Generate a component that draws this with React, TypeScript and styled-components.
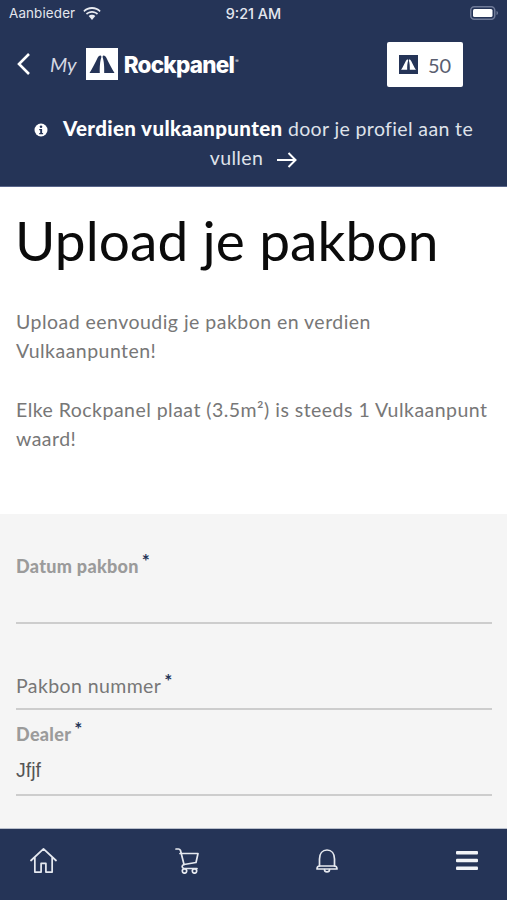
import React from "react";
import styled, { createGlobalStyle } from "styled-components";

const Global = createGlobalStyle`
  html, body { margin: 0; padding: 0; background: #fff; }
  body { font-family: "Lato", "Liberation Sans", sans-serif; }
  * { box-sizing: border-box; }
`;

const navy = "#253457";

const Page = styled.div`
  width: 507px;
  height: 900px;
  display: flex;
  flex-direction: column;
  overflow: hidden;
`;
const Header = styled.header`
  background: ${navy};
  height: 187px;
  flex: none;
  border-bottom: 1px solid #59658a;
`;
const StatusBar = styled.div`
  height: 28px;
  padding: 0 9px 2px 9px;
  display: grid;
  grid-template-columns: 1fr auto 1fr;
  align-items: center;
  color: #e4e7ee;
  font-family: "Inter", "Liberation Sans", sans-serif;
`;
const Carrier = styled.div`
  display: flex;
  align-items: center;
  gap: 8px;
  font-size: 13.4px;
  font-weight: 400;
  letter-spacing: 0.15px;
`;
const Clock = styled.div`
  font-weight: 500;
  font-size: 14.4px;
`;
const BatteryWrap = styled.div`
  justify-self: end;
  display: flex;
`;
const NavRow = styled.div`
  height: 72px;
  padding: 0 44px 0 16px;
  display: flex;
  align-items: center;
  justify-content: space-between;
`;
const Brand = styled.div`
  display: flex;
  align-items: center;
`;
const My = styled.span`
  font-style: italic;
  font-size: 20px;
  color: #d5d9e3;
  margin-left: 18px;
  margin-right: 9px;
`;
const Wordmark = styled.span`
  font-family: "Inter", "Lato", sans-serif;
  font-weight: 800;
  font-size: 22.5px;
  letter-spacing: -0.75px;
  color: #fff;
  margin-left: 6px;
`;
const Reg = styled.sup`
  font-size: 5px;
  font-weight: 400;
  vertical-align: 10px;
  line-height: 0;
  margin-left: 1px;
`;
const PointsBadge = styled.div`
  width: 76px;
  height: 45px;
  margin-top: 1px;
  background: #fff;
  border-radius: 2px;
  display: flex;
  align-items: center;
  gap: 10px;
  padding-left: 12px;
  color: #5a5e70;
  font-size: 20px;
`;
const Banner = styled.div`
  padding: 14px 24px 0;
  text-align: center;
  color: #dfe2ea;
  font-size: 19.5px;
  line-height: 29px;
  letter-spacing: 0.37px;
`;
const Strong = styled.strong`
  color: #fff;
  font-weight: 900;
  font-size: 20.5px;
  line-height: 1;
  letter-spacing: 0.37px;
`;
const InfoSlot = styled.span`
  display: inline-block;
  line-height: 1;
  vertical-align: -1px;
  margin-right: 15px;
`;
const ArrowSlot = styled.span`
  display: inline-block;
  line-height: 1;
  vertical-align: -3px;
  margin-left: 14px;
`;
const Intro = styled.main`
  background: #fff;
  height: 327px;
  flex: none;
  padding: 18px 16px 0 15px;
`;
const Title = styled.h1`
  margin: 0;
  font-weight: 400;
  font-size: 55px;
  line-height: 70px;
  color: #0b0b0b;
  letter-spacing: 0.1px;
`;
const Para = styled.p`
  margin: 0 0 29.5px;
  padding-left: 1px;
  font-size: 19.5px;
  line-height: 29.25px;
  color: #777;
  letter-spacing: 0.47px;
  &:first-of-type { margin-top: 31.5px; }
`;
const Form = styled.section`
  background: #f5f5f5;
  flex: 1;
  min-height: 0;
  padding: 0 15px 0 16px;
`;
const Field = styled.div<{ $height: number }>`
  height: ${(p) => p.$height}px;
  border-bottom: 2px solid #cdcdcd;
  display: flex;
  flex-direction: column;
  justify-content: space-between;
`;
const FloatLabel = styled.label<{ $top: number }>`
  margin-top: ${(p) => p.$top}px;
  font-size: 18px;
  font-weight: 900;
  color: #9b9b9b;
  letter-spacing: 0.3px;
`;
const PlainLabel = styled.label`
  font-size: 19.5px;
  color: #777;
  letter-spacing: 0.4px;
  margin-bottom: 11px;
`;
const Star = styled.sup`
  font-size: 19px;
  font-weight: 700;
  color: ${navy};
  line-height: 0;
  vertical-align: 5px;
  margin-left: 3px;
`;
const Value = styled.div`
  font-family: "Liberation Sans", sans-serif;
  font-size: 19.5px;
  color: #555;
  margin-bottom: 12px;
`;
const TabBar = styled.nav`
  background: ${navy};
  height: 72px;
  flex: none;
  border-top: 1px solid #b9bfcc;
  padding: 0 29px 8px 30px;
  display: flex;
  justify-content: space-between;
  align-items: center;
`;

const Wifi = () => (
  <svg width="18" height="13" viewBox="0 0 20 15" fill="#e9ebf1">
    <path d="M10 2.2c3.4 0 6.5 1.3 8.8 3.5L20 4.2C17.4 1.6 13.9 0 10 0S2.6 1.6 0 4.2l1.2 1.5C3.5 3.5 6.6 2.2 10 2.2z" />
    <path d="M10 6.6c2.2 0 4.2.8 5.7 2.2l1.3-1.5C15.1 5.6 12.7 4.5 10 4.5S4.9 5.6 3 7.3l1.3 1.5C5.8 7.4 7.8 6.6 10 6.6z" />
    <path d="M10 9c-1.500 0-2.800.6-3.800 1.500L10 15l3.800-4.500C12.800 9.600 11.500 9 10 9z" />
  </svg>
);
const Battery = () => (
  <svg width="28" height="14" viewBox="0 0 28 14">
    <rect x="0.75" y="0.75" width="24" height="12.5" rx="3.5" fill="none" stroke="#6f7a98" strokeWidth="1.5" />
    <rect x="3" y="3" width="19.5" height="8" rx="1.5" fill="#fff" />
    <path d="M26.5 5v4c.9-.3 1.500-1.100 1.500-2s-.6-1.700-1.500-2z" fill="#6f7a98" />
  </svg>
);
const Back = () => (
  <svg width="16" height="24" viewBox="0 0 16 24" fill="none" stroke="#fff" strokeWidth="2.6">
    <path d="M13 2 3 12l10 10" />
  </svg>
);
const LogoMark = ({ size, bg, fg }: { size: number; bg: string; fg: string }) => (
  <svg width={size} height={size} viewBox="0 0 32 32" style={{ flex: "none" }}>
    <rect width="32" height="32" fill={bg} />
    <path d="M14.5 7.5C13 7.5 12.3 8.5 11.5 10 9.5 14.500 6.500 20 3.500 25H13.800C13.600 20 14 13 15.300 9.500 15.500 8.500 15.300 7.500 14.500 7.500z" fill={fg} />
    <path d="M17.500 7.500C19 7.500 19.700 8.500 20.500 10 22.500 14.500 25.500 20 28.500 25H18.200C18.400 20 18 13 16.700 9.500 16.500 8.500 16.700 7.500 17.500 7.500z" fill={fg} />
  </svg>
);
const InfoIcon = () => (
  <svg width="14" height="14" viewBox="0 0 14 14">
    <circle cx="7" cy="7" r="6.500" fill="#fff" />
    <circle cx="7" cy="3.800" r="1.300" fill={navy} />
    <path d="M5.200 6h2.900v4h1v1.200H5.200V10h1V7.200h-1z" fill={navy} />
  </svg>
);
const Arrow = () => (
  <svg width="20" height="16" viewBox="0 0 20 16" fill="none" stroke="#fff" strokeWidth="2">
    <path d="M0 8h18.500M11.500 1l7 7-7 7" />
  </svg>
);
const Home = () => (
  <svg width="27" height="25" viewBox="0 0 28 26" fill="none" stroke="#e6e9f0" strokeWidth="1.800" strokeLinejoin="round" strokeLinecap="round">
    <path d="M1 13 14 1l13 12M5 10v15h6.500v-9h5v9H23V10" />
  </svg>
);
const Cart = () => (
  <svg width="24" height="26" viewBox="0 0 24 26" fill="none" stroke="#e6e9f0" strokeWidth="1.700" strokeLinejoin="round" strokeLinecap="round">
    <path d="M1 1h2.500c1 0 1.500.5 2 1.500L9 16.500" />
    <path d="M5 5.500h18l-2 9-12 2" />
    <path d="M9 16.500c-2.500.5-2.500 3.500 0 4h13" />
    <circle cx="9.500" cy="23" r="2.200" />
    <circle cx="19.500" cy="23" r="2.200" />
  </svg>
);
const Bell = () => (
  <svg width="22" height="24" viewBox="0 0 22 24" fill="none" stroke="#e6e9f0" strokeWidth="1.700" strokeLinejoin="round" strokeLinecap="round">
    <path d="M3.500 17V10C3.500 4.500 6.500 1 11 1s7.500 3.500 7.500 9v7" />
    <path d="M1 20c0-1.500 1-3 2.500-3h15c1.500 0 2.500 1.500 2.500 3z" />
    <path d="M8.500 20.500c0 3.200 5 3.200 5 0" />
  </svg>
);
const Burger = () => (
  <svg width="22" height="19" viewBox="0 0 22 19" fill="#f1f3f7">
    <rect y="0" width="22" height="3.600" rx="1" />
    <rect y="7.700" width="22" height="3.600" rx="1" />
    <rect y="15.400" width="22" height="3.600" rx="1" />
  </svg>
);

export default function App() {
  return (
    <Page>
      <Global />
      <Header>
        <StatusBar>
          <Carrier>
            Aanbieder <Wifi />
          </Carrier>
          <Clock>9:21 AM</Clock>
          <BatteryWrap>
            <Battery />
          </BatteryWrap>
        </StatusBar>
        <NavRow>
          <Brand>
            <Back />
            <My>My</My>
            <LogoMark size={32} bg="#fff" fg={navy} />
            <Wordmark>
              Rockpanel<Reg>®</Reg>
            </Wordmark>
          </Brand>
          <PointsBadge>
            <LogoMark size={19} bg={navy} fg="#fff" />
            50
          </PointsBadge>
        </NavRow>
        <Banner>
          <InfoSlot>
            <InfoIcon />
          </InfoSlot>
          <Strong>Verdien vulkaanpunten</Strong> door je profiel aan te vullen
          <ArrowSlot>
            <Arrow />
          </ArrowSlot>
        </Banner>
      </Header>
      <Intro>
        <Title>Upload je pakbon</Title>
        <Para>Upload eenvoudig je pakbon en verdien Vulkaanpunten!</Para>
        <Para>Elke Rockpanel plaat (3.5m²) is steeds 1 Vulkaanpunt waard!</Para>
      </Intro>
      <Form>
        <Field $height={110}>
          <FloatLabel $top={41}>
            Datum pakbon<Star>*</Star>
          </FloatLabel>
        </Field>
        <Field $height={86}>
          <span />
          <PlainLabel>
            Pakbon nummer<Star>*</Star>
          </PlainLabel>
        </Field>
        <Field $height={86}>
          <FloatLabel $top={13}>
            Dealer<Star>*</Star>
          </FloatLabel>
          <Value>Jfjf</Value>
        </Field>
      </Form>
      <TabBar>
        <Home />
        <Cart />
        <Bell />
        <Burger />
      </TabBar>
    </Page>
  );
}
